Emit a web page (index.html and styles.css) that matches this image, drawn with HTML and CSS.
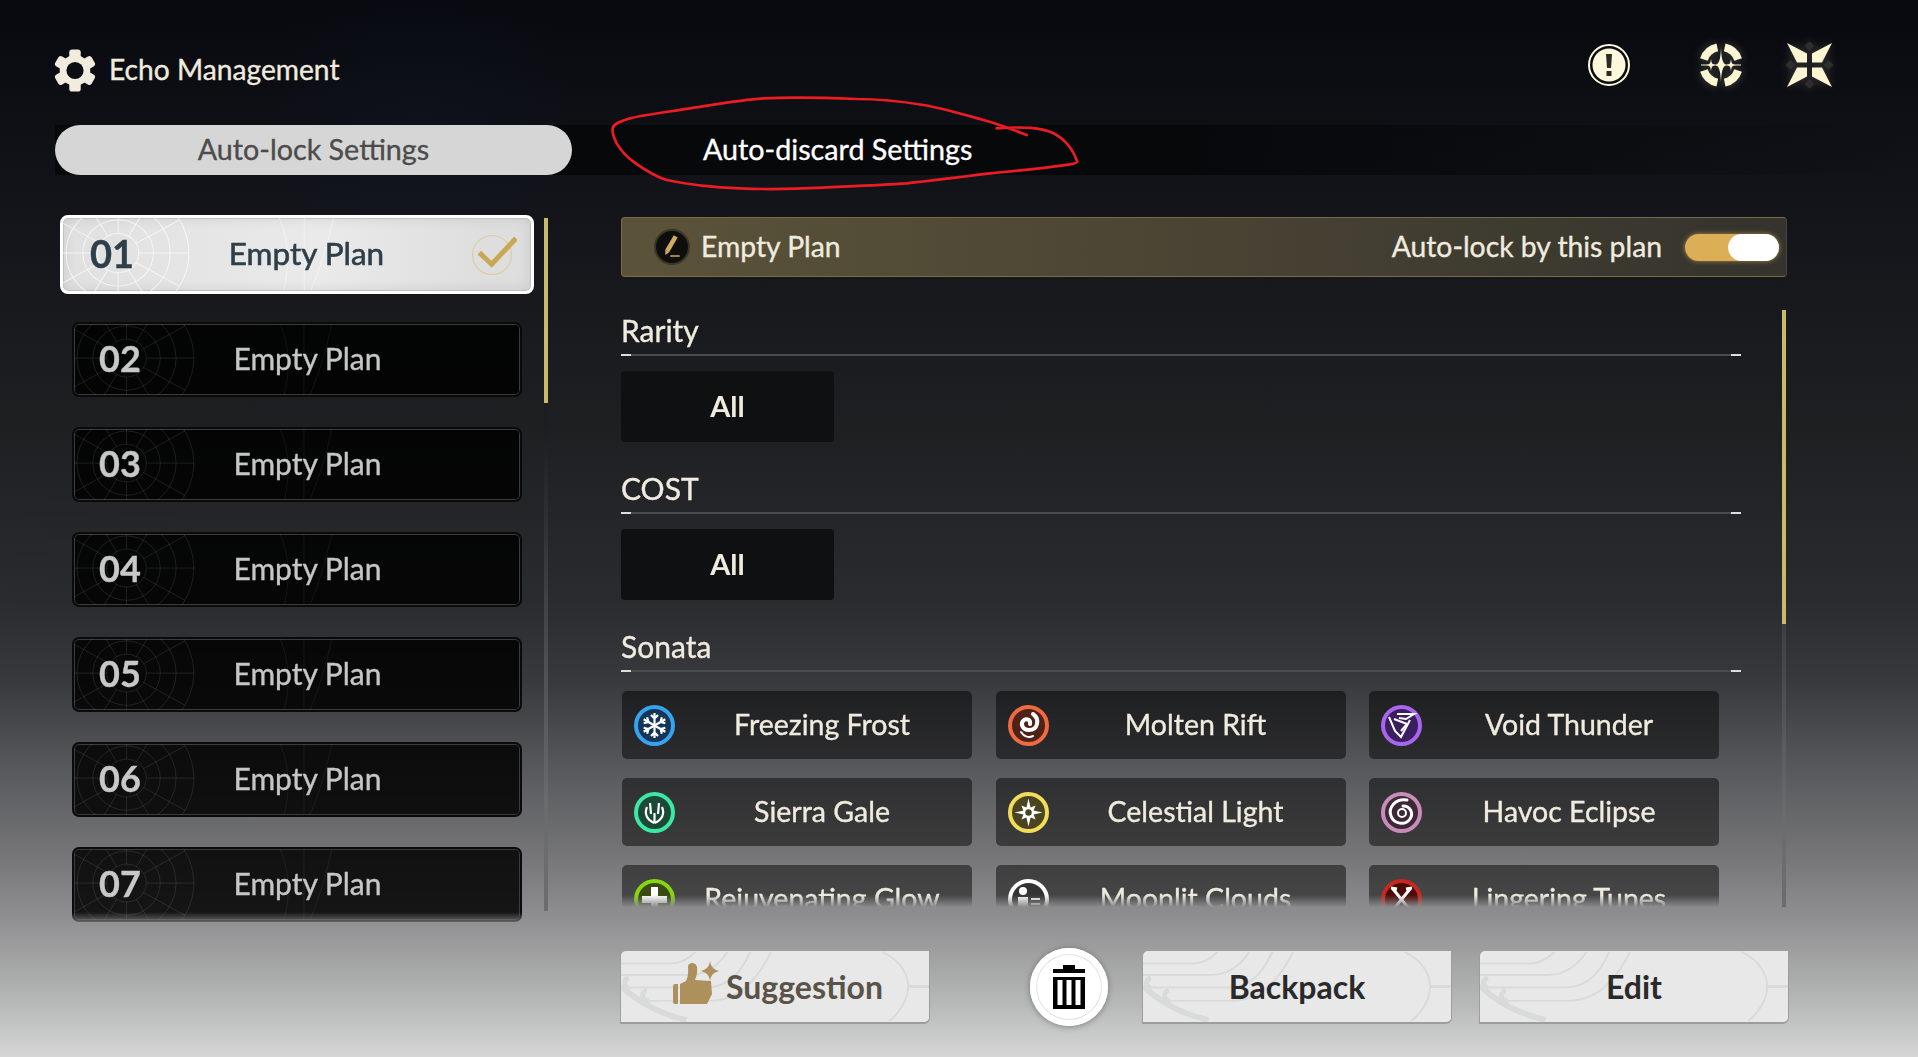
FILE: index.html
```html
<!DOCTYPE html>
<html lang="en">
<head>
    <meta charset="UTF-8">
    <meta name="viewport" content="width=device-width, initial-scale=1.0">
    <title>Echo Management</title>
    <link rel="stylesheet" href="styles.css">
</head>
<body>
    <!-- Shared line art for the cards and buttons -->
    <svg class="defs" aria-hidden="true">
        <symbol id="plan-art" viewBox="0 0 450 75" preserveAspectRatio="none">
            <g fill="none" stroke="currentColor" stroke-width="1">
                <circle cx="53" cy="36" r="20"/>
                <circle cx="53" cy="36" r="34"/>
                <circle cx="53" cy="36" r="50"/>
                <circle cx="53" cy="36" r="68"/>
                <path stroke-dasharray="48 40 48" d="M-15 36H121M53 -32V104M-5.9 2L111.9 70M-5.9 70L111.9 2M19 -22.9L87 94.9M19 94.9L87 -22.9"/>
                <path opacity=".6" d="M208 0C218 25 218 50 212 75M232 0V75M260 0C255 25 248 50 238 75"/>
            </g>
        </symbol>
        <symbol id="btn-art" viewBox="0 0 310 74" preserveAspectRatio="none">
            <g fill="none" stroke="#d9dada" stroke-width="2">
                <path d="M263 1C282 10 289 25 289 37C289 50 281 64 270 73"/>
                <path stroke-width="3" d="M289 37H310"/>
                <path d="M0 13H50C60 13 68 8 75 1"/>
                <path d="M0 25H68C85 25 98 15 107 1"/>
                <path d="M8 38H85C110 38 122 20 130 1"/>
                <path d="M28 52H90C120 52 140 25 151 1"/>
                <path stroke-width="5" d="M8 28C2 30 2 38 8 38M26 41C20 43 20 52 28 52"/>
                <path stroke-width="6" d="M0 36C15 52 40 66 66 72"/>
            </g>
        </symbol>
    </svg>

    <div class="page">
        <header class="topbar">
            <div class="title">
                <svg class="gear" viewBox="0 0 44 44">
                    <g fill="#f2ecdf">
                        <rect x="16" y="0" width="12" height="44" rx="3"/>
                        <rect x="16" y="0" width="12" height="44" rx="3" transform="rotate(60 22 22)"/>
                        <rect x="16" y="0" width="12" height="44" rx="3" transform="rotate(120 22 22)"/>
                    </g>
                    <circle cx="22" cy="22" r="12.5" fill="none" stroke="#f2ecdf" stroke-width="7"/>
                    <circle cx="22" cy="22" r="9" fill="#0b0d14"/>
                </svg>
                <span>Echo Management</span>
            </div>
            <div class="top-icons">
                <svg class="icon-alert" viewBox="0 0 42 42">
                    <circle cx="21" cy="21" r="20" fill="none" stroke="#fdf8dc" stroke-width="2"/>
                    <circle cx="21" cy="21" r="16.5" fill="#fdf8dc"/>
                    <path fill="#2a2a26" d="M18 10h6l-1 14h-4zM18.500 27h5v5h-5z"/>
                </svg>
                <svg class="icon-compass" viewBox="0 0 46 46">
                    <g fill="none" stroke="#fdf6d2" stroke-width="8">
                        <path d="M26.700 5.400A18 18 0 0 1 40.100 17.400"/>
                        <path d="M19.300 5.400A18 18 0 0 0 5.900 17.400"/>
                        <path d="M26.700 40.600A18 18 0 0 0 40.100 28.600"/>
                        <path d="M19.300 40.600A18 18 0 0 1 5.900 28.600"/>
                    </g>
                    <path fill="#fdf6d2" d="M23 6C23.500 18 25 21 28 23C25 25 23.500 28 23 40C22.500 28 21 25 18 23C21 21 22.500 18 23 6Z"/>
                    <path fill="#fdf6d2" d="M13 17C13.500 21 14 22 17 23C14 24 13.500 25 13 29C12.500 25 12 24 9 23C12 22 12.500 21 13 17Z"/>
                    <path fill="#fdf6d2" d="M33 17C33.500 21 34 22 37 23C34 24 33.500 25 33 29C32.500 25 32 24 29 23C32 22 32.500 21 33 17Z"/>
                    <path stroke="#fdf6d2" d="M3 23H43"/>
                </svg>
                <svg class="icon-close" viewBox="0 0 47 46">
                    <g fill="#2e2e2c">
                        <path d="M23.500 -1l5 5-5 5-5-5z"/>
                        <path d="M23.500 37l5 5-5 5-5-5z"/>
                        <path d="M4.500 18l5 5-5 5-5-5z"/>
                        <path d="M42.500 18l5 5-5 5-5-5z"/>
                    </g>
                    <g fill="#fdf6d2">
                        <path d="M1 1L21 11.500V20.500H11Z"/>
                        <path d="M46 1L26 11.500V20.500H36Z"/>
                        <path d="M1 45L21 34.500V25.500H11Z"/>
                        <path d="M46 45L26 34.500V25.500H36Z"/>
                    </g>
                </svg>
            </div>
        </header>

        <nav class="tabs">
            <div class="tab tab-active">Auto-lock Settings</div>
            <div class="tab">Auto-discard Settings</div>
        </nav>

        <main class="main">
            <section class="plans">
                <div class="plan-list">
                    <div class="plan plan-selected">
                        <svg class="plan-art"><use href="#plan-art"/></svg>
                        <span class="plan-num">01</span>
                        <span class="plan-name">Empty Plan</span>
                        <svg class="plan-check" viewBox="0 0 50 50">
                            <circle cx="25" cy="25" r="19.500" fill="none" stroke="#dccda4" stroke-width="1.200"/>
                            <path fill="none" stroke="#c8a854" stroke-width="5" d="M12.300 22.700L24.700 34.300L49 8.300"/>
                        </svg>
                    </div>
                    <div class="plan">
                        <svg class="plan-art"><use href="#plan-art"/></svg>
                        <span class="plan-num">02</span>
                        <span class="plan-name">Empty Plan</span>
                    </div>
                    <div class="plan">
                        <svg class="plan-art"><use href="#plan-art"/></svg>
                        <span class="plan-num">03</span>
                        <span class="plan-name">Empty Plan</span>
                    </div>
                    <div class="plan">
                        <svg class="plan-art"><use href="#plan-art"/></svg>
                        <span class="plan-num">04</span>
                        <span class="plan-name">Empty Plan</span>
                    </div>
                    <div class="plan">
                        <svg class="plan-art"><use href="#plan-art"/></svg>
                        <span class="plan-num">05</span>
                        <span class="plan-name">Empty Plan</span>
                    </div>
                    <div class="plan">
                        <svg class="plan-art"><use href="#plan-art"/></svg>
                        <span class="plan-num">06</span>
                        <span class="plan-name">Empty Plan</span>
                    </div>
                    <div class="plan">
                        <svg class="plan-art"><use href="#plan-art"/></svg>
                        <span class="plan-num">07</span>
                        <span class="plan-name">Empty Plan</span>
                    </div>
                </div>
                <div class="scroll-track plans-scroll"><div class="scroll-thumb"></div></div>
            </section>

            <section class="detail">
                <div class="detail-bar">
                    <svg class="pencil" viewBox="0 0 36 36">
                        <circle cx="18" cy="18" r="17" fill="#0e0e0c" stroke="#3a3526" stroke-width="2"/>
                        <path fill="none" stroke="#d2aa68" stroke-width="4.500" d="M21.700 7.300L13.200 22"/>
                        <path fill="#d2aa68" d="M11.200 20.800L15.200 23.200L11.400 26Z"/>
                        <path stroke="#d2aa68" stroke-width="1.500" d="M16.300 27H25.700"/>
                    </svg>
                    <span class="detail-name">Empty Plan</span>
                    <span class="detail-label">Auto-lock by this plan</span>
                    <div class="toggle"><div class="toggle-knob"></div></div>
                </div>

                <div class="detail-body">
                    <div class="filters">
                        <h2 class="filter-title">Rarity</h2>
                        <div class="filter-line"></div>
                        <div class="filter-all">All</div>

                        <h2 class="filter-title">COST</h2>
                        <div class="filter-line"></div>
                        <div class="filter-all">All</div>

                        <h2 class="filter-title">Sonata</h2>
                        <div class="filter-line"></div>
                        <div class="sonata-grid">
                            <div class="sonata">
                                <svg class="sonata-icon" viewBox="0 0 41 41">
                                    <circle cx="20.500" cy="20.500" r="18.500" fill="#143555" stroke="#37a3ee" stroke-width="4"/>
                                    <g fill="none" stroke="#fff" stroke-width="2.200">
                                        <path d="M20.500 20.500V8M17 10l3.500 3.500L24 10"/>
                                        <path transform="rotate(60 20.500 20.500)" d="M20.500 20.500V8M17 10l3.500 3.500L24 10"/>
                                        <path transform="rotate(120 20.500 20.500)" d="M20.500 20.500V8M17 10l3.500 3.500L24 10"/>
                                        <path transform="rotate(180 20.500 20.500)" d="M20.500 20.500V8M17 10l3.500 3.500L24 10"/>
                                        <path transform="rotate(240 20.500 20.500)" d="M20.500 20.500V8M17 10l3.500 3.500L24 10"/>
                                        <path transform="rotate(300 20.500 20.500)" d="M20.500 20.500V8M17 10l3.500 3.500L24 10"/>
                                    </g>
                                </svg>
                                <span class="sonata-name">Freezing Frost</span>
                            </div>
                            <div class="sonata">
                                <svg class="sonata-icon" viewBox="0 0 41 41">
                                    <circle cx="20.500" cy="20.500" r="18.500" fill="#4f2218" stroke="#ee6a43" stroke-width="4"/>
                                    <g fill="none" stroke="#fff" stroke-linecap="round">
                                        <path stroke-width="4" d="M25 9C32 14 30 25 21 25C14 25 12 18 16 15C19 13 23 15 22 19"/>
                                        <path stroke-width="2" d="M13 27C16 32 21 33 25 31"/>
                                    </g>
                                </svg>
                                <span class="sonata-name">Molten Rift</span>
                            </div>
                            <div class="sonata">
                                <svg class="sonata-icon" viewBox="0 0 41 41">
                                    <circle cx="20.500" cy="20.500" r="18.500" fill="#3a1e60" stroke="#a866f0" stroke-width="4"/>
                                    <g fill="none" stroke="#fff" stroke-width="2">
                                        <path d="M8 12L14 26L20 32L29 15"/>
                                        <path d="M16 9H33L25 14L18 13"/>
                                        <path d="M13 14L26 19L20 26"/>
                                    </g>
                                </svg>
                                <span class="sonata-name">Void Thunder</span>
                            </div>
                            <div class="sonata">
                                <svg class="sonata-icon" viewBox="0 0 41 41">
                                    <circle cx="20.500" cy="20.500" r="18.500" fill="#1a4a36" stroke="#3de8a6" stroke-width="4"/>
                                    <g fill="none" stroke="#fff" stroke-width="2.200">
                                        <path d="M20.500 31V21"/>
                                        <path d="M20.500 31C13 28 10 22 13 15"/>
                                        <path d="M20.500 31C28 28 31 22 28 15"/>
                                        <path d="M16 11L17 22"/>
                                        <path d="M25 11L24 22"/>
                                    </g>
                                </svg>
                                <span class="sonata-name">Sierra Gale</span>
                            </div>
                            <div class="sonata">
                                <svg class="sonata-icon" viewBox="0 0 41 41">
                                    <circle cx="20.500" cy="20.500" r="18.500" fill="#4a4520" stroke="#f2dc5a" stroke-width="4"/>
                                    <polygon fill="#fff" points="20.500,6.500 22.600,15.400 27.600,13.400 25.600,18.400 34.500,20.500 25.600,22.600 27.600,27.600 22.600,25.600 20.500,34.500 18.400,25.600 13.400,27.600 15.400,22.600 6.500,20.500 15.400,18.400 13.400,13.400 18.400,15.400"/>
                                    <circle cx="20.500" cy="20.500" r="3.200" fill="#4a4520"/>
                                </svg>
                                <span class="sonata-name">Celestial Light</span>
                            </div>
                            <div class="sonata">
                                <svg class="sonata-icon" viewBox="0 0 41 41">
                                    <circle cx="20.500" cy="20.500" r="18.500" fill="#3c2836" stroke="#c98cba" stroke-width="4"/>
                                    <g fill="none" stroke="#fff" stroke-linecap="round">
                                        <path stroke-width="3" d="M26 8C14 6 7 16 10 24C13 32 24 34 29 27C33 21 29 14 22 14"/>
                                        <circle cx="21" cy="21" r="4" stroke-width="2"/>
                                    </g>
                                </svg>
                                <span class="sonata-name">Havoc Eclipse</span>
                            </div>
                            <div class="sonata">
                                <svg class="sonata-icon" viewBox="0 0 41 41">
                                    <circle cx="20.500" cy="20.500" r="18.500" fill="#3a4a10" stroke="#86d60f" stroke-width="4"/>
                                    <path fill="#fff" d="M17 8h7v9h9v7h-9v9h-7v-9H8v-7h9z"/>
                                </svg>
                                <span class="sonata-name">Rejuvenating Glow</span>
                            </div>
                            <div class="sonata">
                                <svg class="sonata-icon" viewBox="0 0 41 41">
                                    <circle cx="20.500" cy="20.500" r="18.500" fill="#333" stroke="#fff" stroke-width="4"/>
                                    <circle cx="15" cy="12" r="4" fill="#fff"/>
                                    <path fill="#fff" d="M10 18h10v14H10zM23 19h9v2h-9zM23 24h9v2h-9zM23 29h7v2h-7z"/>
                                </svg>
                                <span class="sonata-name">Moonlit Clouds</span>
                            </div>
                            <div class="sonata">
                                <svg class="sonata-icon" viewBox="0 0 41 41">
                                    <circle cx="20.500" cy="20.500" r="18.500" fill="#4a0a08" stroke="#c8281e" stroke-width="4"/>
                                    <path fill="none" stroke="#fff" stroke-width="3" d="M12 10L29 31M29 10L12 31M10 9l6 1M31 9l-6 1"/>
                                </svg>
                                <span class="sonata-name">Lingering Tunes</span>
                            </div>
                        </div>
                    </div>
                    <div class="scroll-track detail-scroll"><div class="scroll-thumb"></div></div>
                </div>
            </section>
        </main>

        <footer class="actions">
            <button class="action action-suggest">
                <svg class="action-art"><use href="#btn-art"/></svg>
                <span class="action-label">
                    <svg class="thumb" viewBox="0 0 46 43">
                        <path fill="#ad905c" d="M0 25a2 2 0 0 1 2-2h3v20H2a2 2 0 0 1-2-2zM7 23L13 20C16 14 15 9 15 5C16 1 23 1 24 6C25 12 23 16 22 19L38 20L39 33L34 43H7Z"/>
                        <path fill="#ad905c" d="M37 0C38 6 40 8 46 10C40 12 38 14 37 20C36 14 34 12 28 10C34 8 36 6 37 0Z"/>
                    </svg>
                    Suggestion
                </span>
            </button>
            <button class="trash">
                <svg class="trash-icon" viewBox="0 0 32 44">
                    <path d="M10 0h12v4h10v4H0V4h10z"/>
                    <path d="M0 12h32v32H0z"/>
                    <path fill="#fff" d="M4.500 15h5v25h-5zM13.500 15h5v25h-5zM22.500 15h5v25h-5z"/>
                </svg>
            </button>
            <button class="action">
                <svg class="action-art"><use href="#btn-art"/></svg>
                <span class="action-label">Backpack</span>
            </button>
            <button class="action">
                <svg class="action-art"><use href="#btn-art"/></svg>
                <span class="action-label">Edit</span>
            </button>
        </footer>

        <!-- Red hand-drawn mark around the second tab -->
        <svg class="scribble" viewBox="0 0 1500 360">
            <path fill="none" stroke="#ed1c24" stroke-width="8" stroke-linecap="round" stroke-linejoin="round" d="M1310 150C1270 135 1230 118 1180 105C1120 88 1060 70 1000 60C940 50 870 42 800 42C700 38 600 36 520 40C440 46 370 60 300 70C240 80 170 88 120 100C95 108 70 115 68 130C66 145 72 160 80 175C95 200 110 215 130 230C160 252 195 275 230 285C300 300 380 308 450 310C530 314 620 312 700 308C780 304 870 300 950 295C1040 285 1120 275 1200 265C1280 258 1370 248 1440 238C1450 236 1462 234 1462 230C1455 212 1445 190 1430 175C1415 158 1400 148 1380 140C1355 132 1330 128 1300 128C1275 127 1245 128 1220 130"/>
        </svg>
    </div>
</body>
</html>
```

FILE: styles.css
```css
* {
    box-sizing: border-box;
}
body {
    margin: 0;
    overflow: hidden;
    font-family: Lato, "Liberation Sans", sans-serif;
}
.defs {
    display: none;
}
.page {
    position: relative;
    display: flex;
    flex-direction: column;
    width: 1918px;
    height: 1057px;
    overflow: hidden;
    color: #f0ebdf;
    -webkit-text-stroke: .35px currentColor;
    background:
        radial-gradient(circle at 100px 560px, rgba(20,35,70,.05), transparent 120px),
        radial-gradient(circle at 420px 110px, rgba(20,35,70,.12), transparent 160px),
        linear-gradient(to bottom, #07090e 0, #12141a 200px, #1d1f21 420px, #2a2b2e 600px, #38393c 680px, #58595c 770px, #777779 860px, #909092 920px, #b5b6b6 1000px, #d6d6d6 1057px);
}

/* Top bar */
.topbar {
    display: flex;
    justify-content: space-between;
    height: 125px;
    padding-left: 54px;
}
.title {
    display: flex;
    align-items: center;
    gap: 13px;
    height: 46px;
    margin-top: 47px;
    font-size: 28.2px;
}
.title span {
    padding-bottom: 3px;
}
.gear {
    width: 42px;
    height: 43px;
}
.top-icons {
    display: flex;
    margin-top: 41px;
    height: 47px;
    align-items: center;
    padding-right: 85px;
}
.icon-alert {
    width: 42px;
    height: 42px;
}
.icon-compass {
    width: 46px;
    height: 46px;
    margin-left: 68px;
    filter: drop-shadow(0 0 5px rgba(253,246,210,.25));
}
.icon-close {
    width: 47px;
    height: 46px;
    margin-left: 42px;
    filter: drop-shadow(0 0 5px rgba(253,246,210,.2));
}

/* Tabs */
.tabs {
    display: flex;
    height: 50px;
    margin-left: 55px;
    background: linear-gradient(to right, #07080a 60%, rgba(7,8,10,0));
}
.tab {
    display: flex;
    align-items: center;
    justify-content: center;
    padding: 0 0 2px 131px;
    font-size: 28.7px;
    color: #fff;
}
.tab-active {
    width: 517px;
    padding-left: 0;
    border-radius: 25px;
    background: #d6d6d6;
    color: #4c4c4c;
}

/* Layout */
.main {
    display: flex;
    flex: 1;
}
.plans {
    display: flex;
    align-items: flex-start;
    margin: 40px 0 0 60px;
}
.plan-list {
    display: flex;
    flex-direction: column;
    gap: 30px;
    width: 474px;
    padding: 2px 12px 0;
    -webkit-mask-image: linear-gradient(to bottom, #000 calc(100% - 10px), rgba(0,0,0,.35));
    mask-image: linear-gradient(to bottom, #000 calc(100% - 10px), rgba(0,0,0,.35));
}
.plan {
    display: grid;
    align-items: center;
    flex: none;
    height: 75px;
    overflow: hidden;
    border: 2px solid #0a0a0a;
    border-radius: 7px;
    background: rgba(0,0,0,.85);
    box-shadow: inset 0 0 0 1px #3b3b3b;
    color: rgba(255,255,255,.1);
}
.plan > * {
    grid-area: 1 / 1;
}
.plan-art {
    width: 100%;
    height: 100%;
}
.plan-num {
    justify-self: start;
    margin-left: 25px;
    padding-bottom: 3px;
    font-size: 36px;
    font-weight: 700;
    color: #c8c8c8;
}
.plan-name {
    justify-self: center;
    padding: 0 0 3px 21px;
    font-size: 30px;
    color: #c6c6c6;
}
.plan-selected {
    height: 79px;
    margin: -2px -12px;
    border: 3px solid #fff;
    border-radius: 8px;
    background: linear-gradient(to right, #e0e0e0, #eaeaea 55%, #dedede 90%);
    box-shadow: inset 0 0 0 1px #c0c0c0, inset 0 0 14px rgba(0,0,0,.1);
    color: rgba(255,255,255,.65);
}
.plan-selected .plan-num {
    margin-left: 27px;
    font-size: 38px;
    color: #2f3f4a;
}
.plan-selected .plan-name {
    padding-left: 19px;
    font-size: 31.5px;
    color: #2f3f4a;
    -webkit-text-stroke: .6px currentColor;
}
.plan-check {
    justify-self: end;
    width: 50px;
    height: 50px;
    margin-right: 14px;
}

/* Scrollbars */
.scroll-track {
    flex: none;
    width: 4px;
    background: linear-gradient(to bottom, #1c1d20 0, #1c1d20 30%, #6b6c6e 85%);
}
.scroll-thumb {
    background: #c9b968;
}
.plans-scroll {
    height: 693px;
    margin: 3px 0 0 10px;
}
.plans-scroll .scroll-thumb {
    height: 185px;
}
.detail-scroll {
    height: 597px;
    margin-left: 41px;
}
.detail-scroll .scroll-thumb {
    height: 314px;
}

/* Right column */
.detail {
    width: 1166px;
    margin: 42px 0 0 73px;
}
.detail-bar {
    display: flex;
    align-items: center;
    height: 60px;
    padding: 0 7px 0 32px;
    border: 1px solid #7a6b42;
    border-right-color: #47443a;
    border-radius: 4px;
    background: linear-gradient(to right, #5b5339, #4b4534 45%, #34332d);
    font-size: 28.3px;
}
.detail-name,
.detail-label {
    padding-bottom: 3px;
}
.pencil {
    width: 36px;
    height: 36px;
    margin-right: 11px;
}
.detail-label {
    margin-left: auto;
}
.toggle {
    display: flex;
    justify-content: flex-end;
    width: 94px;
    height: 27px;
    margin-left: 23px;
    border-radius: 14px;
    background: #dcae55;
    box-shadow: 0 0 5px rgba(220,174,85,.7);
}
.toggle-knob {
    width: 51px;
    border-radius: 14px;
    background: #fff;
}
.detail-body {
    display: flex;
    margin-top: 33px;
}
.filters {
    width: 1120px;
    height: 597px;
    overflow: hidden;
    -webkit-mask-image: linear-gradient(to bottom, #000 calc(100% - 12px), transparent);
    mask-image: linear-gradient(to bottom, #000 calc(100% - 12px), transparent);
}
.filter-title {
    margin: 0 0 7px;
    padding-top: 4px;
    height: 37px;
    font-size: 30px;
    font-weight: 400;
    line-height: 32px;
}
.filter-line {
    height: 2px;
    background: linear-gradient(to right, #ddd 0 10px, #4a4b4d 10px calc(100% - 10px), #ddd calc(100% - 10px));
}
.filter-all {
    display: flex;
    align-items: center;
    justify-content: center;
    width: 213px;
    height: 71px;
    margin: 15px 0 26px;
    padding-bottom: 2px;
    border-radius: 4px;
    background: #0f1011;
    font-size: 29px;
    font-weight: 700;
    -webkit-text-stroke: 0;
}
.sonata-grid {
    display: grid;
    grid-template-columns: repeat(3, 350px);
    grid-auto-rows: 68px;
    column-gap: 23.5px;
    row-gap: 19px;
    margin-top: 19px;
    padding-left: 1px;
}
.sonata {
    display: flex;
    align-items: center;
    border-radius: 5px;
    background: rgba(0,0,0,.48);
    font-size: 28.5px;
}
.sonata-icon {
    flex: none;
    width: 41px;
    height: 41px;
    margin: 0 -3px 0 12px;
}
.sonata-name {
    flex: 1;
    padding-bottom: 2px;
    text-align: center;
}

/* Bottom buttons */
.actions {
    display: flex;
    align-items: center;
    height: 78px;
    margin-bottom: 31px;
    padding-left: 620px;
    -webkit-text-stroke: 0;
}
.action {
    display: grid;
    align-items: center;
    justify-items: center;
    width: 310px;
    height: 74px;
    padding: 0;
    overflow: hidden;
    border: 1px solid #9c9d9d;
    border-bottom-width: 2px;
    border-radius: 6px 0 6px 0;
    background: #e8e8e8;
    font-family: inherit;
    font-size: 32px;
    font-weight: 700;
    color: #2a2a2a;
}
.action > * {
    grid-area: 1 / 1;
}
.action-art {
    width: 100%;
    height: 100%;
}
.action-label {
    display: flex;
    align-items: center;
    gap: 7px;
}
.action-suggest {
    color: #5a5348;
}
.action-suggest .action-label {
    margin-left: 6px;
}
.thumb {
    width: 46px;
    height: 43px;
    margin-top: -8px;
}
.trash {
    display: flex;
    align-items: center;
    justify-content: center;
    width: 78px;
    height: 78px;
    margin: 0 34px 0 100px;
    padding: 0;
    border: 0;
    border-radius: 50%;
    background: #fff;
    box-shadow: inset 0 0 0 6px #fff, inset 0 0 0 7px #e2e2e2, 0 1px 6px rgba(0,0,0,.35);
}
.trash-icon {
    width: 32px;
    height: 44px;
}
.action + .action {
    margin-left: 27px;
}

/* The red mark sits over the tabs */
.scribble {
    position: absolute;
    left: 590px;
    top: 85px;
    width: 500px;
    height: 120px;
}
```
